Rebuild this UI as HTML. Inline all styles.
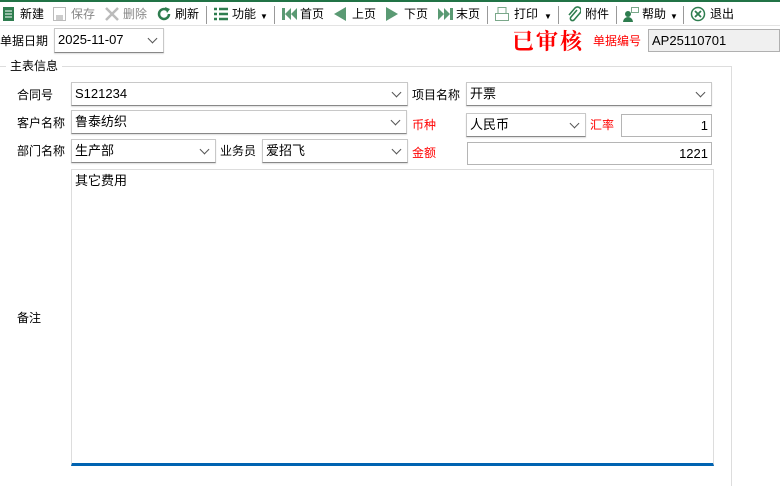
<!DOCTYPE html>
<html><head><meta charset="utf-8"><style>
*{margin:0;padding:0;box-sizing:border-box}
body{width:780px;height:471px;background:#fff;font-family:"Liberation Sans","Noto Sans CJK SC",sans-serif;font-size:12px;color:#000;position:relative;overflow:hidden}
.a{position:absolute;white-space:nowrap}
.tb{position:absolute;left:0;top:0;width:780px;height:26px;border-top:2px solid #217346;border-bottom:1px solid #e3e3e3;background:#fff}
.t{position:absolute;top:5px;font-size:12px;line-height:14px}
.sep{position:absolute;top:4px;width:1px;height:18px;background:#999}
.g{color:#888}
.box{position:absolute;border:1px solid #c8c8c8;background:#fff;height:24px;line-height:22px;padding-left:3px;font-size:13px}
.cb{border-bottom:1px solid #888;box-shadow:0 1px 1px #ddd}
.cb:after{content:"";position:absolute;right:7px;top:6px;width:6px;height:6px;border-right:1px solid #555;border-bottom:1px solid #555;transform:rotate(45deg)}
.lb{position:absolute;font-size:12px;line-height:14px}
.red{color:#f00}
.num{text-align:right;padding-right:3px;border-color:#b5b5b5}
</style></head><body>
<div class="tb">
<svg class="a" style="left:2px;top:4px" width="14" height="16"><rect x="1" y="1" width="11" height="14" fill="#2e7d4f"/><path d="M3 5h7M3 8h7M3 11h7" stroke="#fff"/></svg>
<span class="t" style="left:20px">新建</span>
<svg class="a" style="left:52px;top:4px" width="16" height="16"><rect x="1.5" y="1.5" width="12" height="13" fill="none" stroke="#bbb"/><rect x="4" y="9" width="7" height="5" fill="#ccc"/></svg>
<span class="t g" style="left:71px">保存</span>
<svg class="a" style="left:104px;top:4px" width="16" height="16"><path d="M2 2l12 12M14 2L2 14" stroke="#bbb" stroke-width="2.5"/></svg>
<span class="t g" style="left:123px">删除</span>
<svg class="a" style="left:156px;top:4px" width="16" height="16"><path d="M13 8a5 5 0 1 1-2-4" fill="none" stroke="#2e7d4f" stroke-width="2.5"/><path d="M9 1l5 2-3 4z" fill="#2e7d4f"/></svg>
<span class="t" style="left:175px">刷新</span>
<div class="sep" style="left:206px"></div>
<svg class="a" style="left:213px;top:5px" width="16" height="14"><path d="M1 2h3M6 2h9M1 7h3M6 7h9M1 12h3M6 12h9" stroke="#2e7d4f" stroke-width="2.5"/></svg>
<span class="t" style="left:232px">功能</span><span class="t" style="left:260px;font-size:8px;top:8px">▼</span>
<div class="sep" style="left:274px"></div>
<svg class="a" style="left:282px;top:5px" width="16" height="14"><rect x="0" y="1" width="3" height="12" fill="#5a9a73"/><path d="M9 1L3 7l6 6zM15 1L9 7l6 6z" fill="#5a9a73"/></svg>
<span class="t" style="left:300px">首页</span>
<svg class="a" style="left:333px;top:5px" width="14" height="14"><path d="M13 0L1 7l12 7z" fill="#5a9a73"/></svg>
<span class="t" style="left:352px">上页</span>
<svg class="a" style="left:385px;top:5px" width="14" height="14"><path d="M1 0l12 7-12 7z" fill="#5a9a73"/></svg>
<span class="t" style="left:404px">下页</span>
<svg class="a" style="left:437px;top:5px" width="16" height="14"><path d="M1 1l6 6-6 6zM7 1l6 6-6 6z" fill="#5a9a73"/><rect x="13" y="1" width="3" height="12" fill="#5a9a73"/></svg>
<span class="t" style="left:456px">末页</span>
<div class="sep" style="left:487px"></div>
<svg class="a" style="left:494px;top:4px" width="16" height="16"><rect x="4" y="1.5" width="8" height="6" fill="none" stroke="#7aa88a"/><rect x="1.5" y="7.5" width="13" height="7" fill="none" stroke="#7aa88a"/></svg>
<span class="t" style="left:514px">打印</span><span class="t" style="left:544px;font-size:8px;top:8px">▼</span>
<div class="sep" style="left:558px"></div>
<svg class="a" style="left:567px;top:4px" width="14" height="16"><path d="M10 4L4 11a2 2 0 0 0 3 3l6-7a3.5 3.5 0 0 0-5-5L2 9" fill="none" stroke="#2e7d4f" stroke-width="1.6"/></svg>
<span class="t" style="left:585px">附件</span>
<div class="sep" style="left:616px"></div>
<svg class="a" style="left:622px;top:3px" width="18" height="18"><circle cx="6" cy="9" r="3" fill="#2e7d4f"/><path d="M1 17a5 5 0 0 1 10 0z" fill="#2e7d4f"/><rect x="9.5" y="2.5" width="7" height="5" fill="none" stroke="#7aa88a"/></svg>
<span class="t" style="left:642px">帮助</span><span class="t" style="left:670px;font-size:8px;top:8px">▼</span>
<div class="sep" style="left:683px"></div>
<svg class="a" style="left:690px;top:4px" width="16" height="16"><circle cx="8" cy="8" r="6.5" fill="none" stroke="#2e7d4f" stroke-width="1.5"/><path d="M5 5l6 6M11 5l-6 6" stroke="#2e7d4f" stroke-width="1.8"/></svg>
<span class="t" style="left:710px">退出</span>
</div>

<span class="lb" style="left:0;top:34px">单据日期</span>
<div class="box cb" style="left:54px;top:28px;width:110px;height:25px">2025-11-07</div>
<span class="lb red" style="left:512px;top:29px;font-size:22px;line-height:24px;font-family:'Noto Serif CJK SC',serif;letter-spacing:2px;font-weight:bold">已审核</span>
<span class="lb red" style="left:593px;top:34px">单据编号</span>
<div class="box" style="left:648px;top:29px;width:132px;height:23px;background:#f0f0f0;border-color:#b0b0b0;line-height:21px">AP25110701</div>

<div class="a" style="left:0;top:66px;width:732px;height:420px;border-top:1px solid #ddd;border-right:1px solid #ddd"></div>
<span class="lb" style="left:6px;top:59px;background:#fff;padding:0 4px">主表信息</span>

<span class="lb" style="left:17px;top:88px">合同号</span>
<div class="box cb" style="left:71px;top:82px;width:337px">S121234</div>
<span class="lb" style="left:412px;top:88px">项目名称</span>
<div class="box cb" style="left:466px;top:82px;width:246px">开票</div>

<span class="lb" style="left:17px;top:116px">客户名称</span>
<div class="box cb" style="left:71px;top:110px;width:336px">鲁泰纺织</div>
<span class="lb red" style="left:412px;top:118px">币种</span>
<div class="box cb" style="left:466px;top:113px;width:120px">人民币</div>
<span class="lb red" style="left:590px;top:118px">汇率</span>
<div class="box num" style="left:621px;top:114px;width:91px;height:23px;line-height:21px">1</div>

<span class="lb" style="left:17px;top:144px">部门名称</span>
<div class="box cb" style="left:71px;top:139px;width:145px">生产部</div>
<span class="lb" style="left:220px;top:144px">业务员</span>
<div class="box cb" style="left:262px;top:139px;width:146px">爱招飞</div>
<span class="lb red" style="left:412px;top:146px">金额</span>
<div class="box num" style="left:467px;top:142px;width:245px;height:23px;line-height:21px">1221</div>

<div class="a" style="left:71px;top:169px;width:643px;height:297px;border:1px solid #ddd;border-bottom:3px solid #0063b1;padding:4px 3px;line-height:14px;font-size:13px">其它费用</div>
<span class="lb" style="left:17px;top:311px">备注</span>
</body></html>
